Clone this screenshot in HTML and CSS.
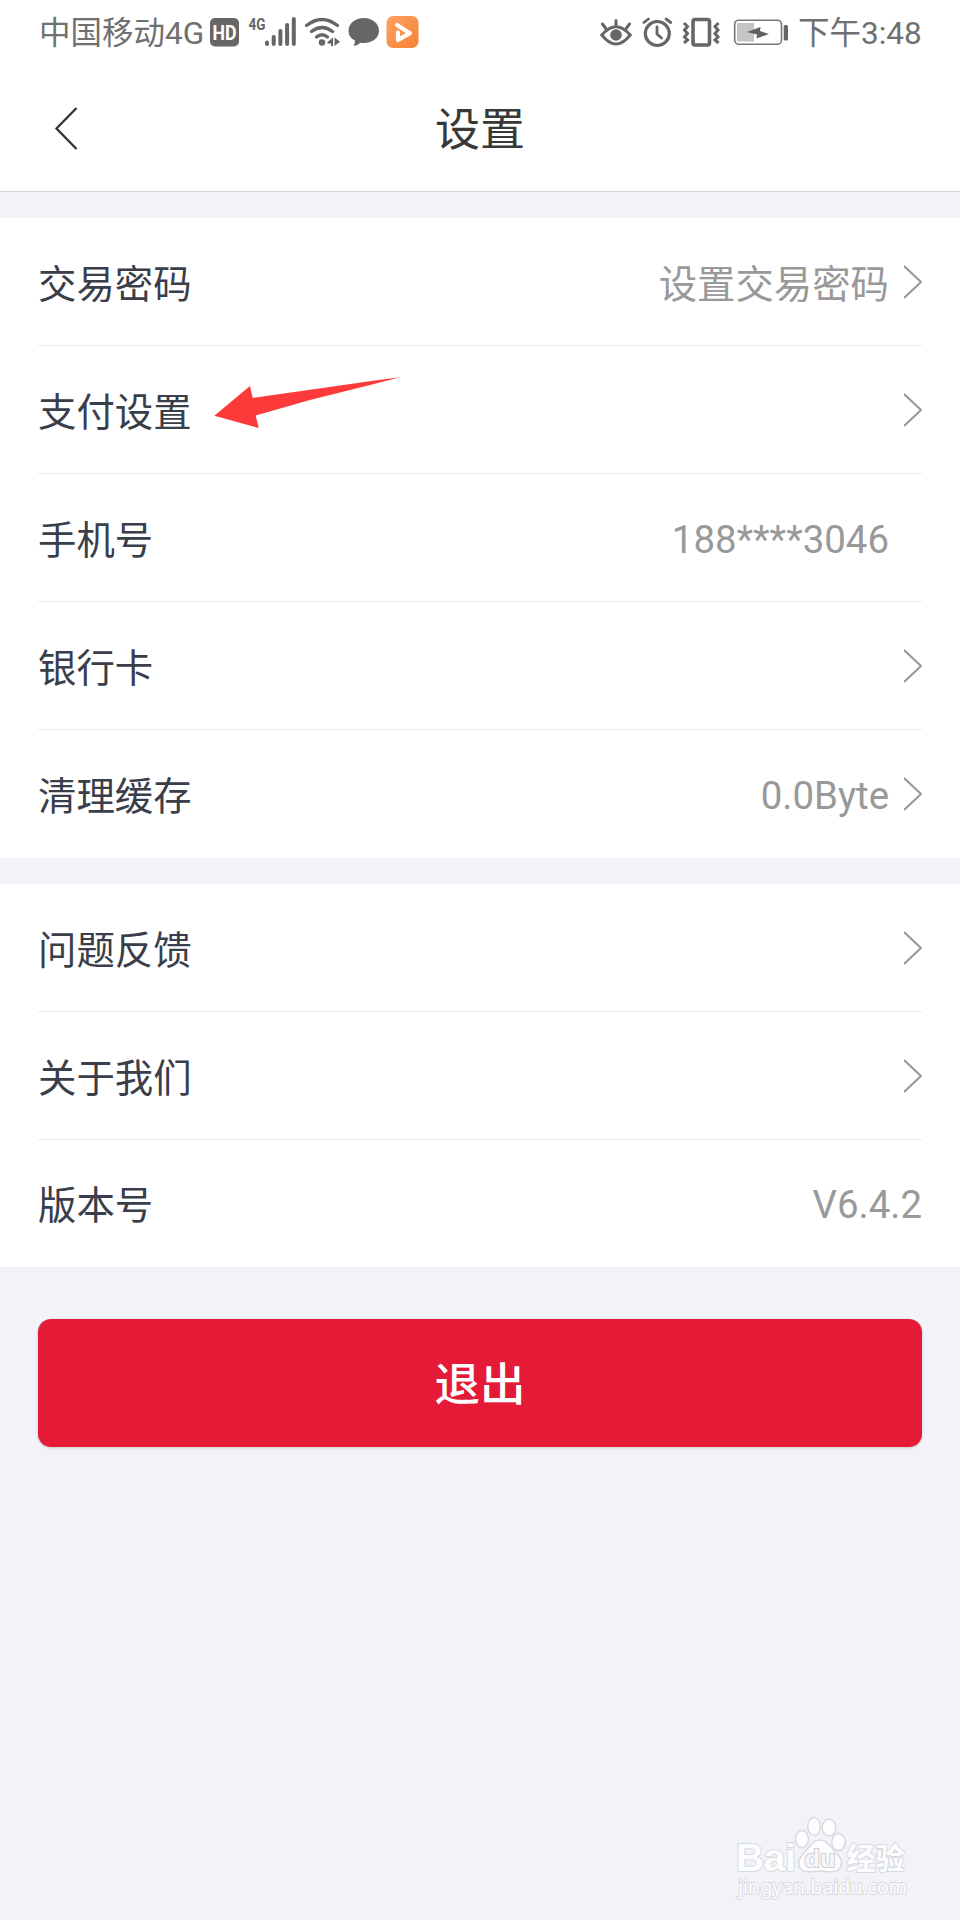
FILE: index.html
```html
<!DOCTYPE html>
<html lang="zh-CN">
<head>
<meta charset="utf-8">
<title>设置</title>
<link rel="stylesheet" href="styles.css">
</head>
<body>
<div class="screen">
  <div class="status">
    <div class="status-group">
      <span class="carrier">中国移动4G</span>
      <svg class="status-icons" width="212" height="64" viewBox="210 0 212 64">
        <rect x="210" y="18" width="29" height="28.500" rx="5" fill="#666"/>
        <text class="hd" x="212.500" y="39.500" textLength="24" lengthAdjust="spacingAndGlyphs">HD</text>
        <text class="net" x="248.500" y="30" textLength="17" lengthAdjust="spacingAndGlyphs">4G</text>
        <g stroke="#666" stroke-width="4" stroke-linecap="round" fill="none">
          <path d="M267 42.500V44M273.700 37V44M280.400 31V44M287.100 25V44M293.800 19V44"/>
        </g>
        <g stroke="#666" stroke-width="3.400" stroke-linecap="round" fill="none">
          <path d="M306.500 25.500Q322 13.500 337.500 25.500M311.500 31.500Q322 23.500 332.500 31.500M316.500 37Q322 32.500 327.500 37"/>
        </g>
        <circle cx="322" cy="42.500" r="3.200" fill="#666"/>
        <path d="M333 37.500V46H331V43.500H327.500V42ZM334.500 37.500V46L340 41.800Z" fill="#666"/>
        <path d="M363.800 18C372.500 18 379 23.500 379 30.800S372.500 43 364 43Q361.800 43 360.500 42.700Q357.500 45.500 353.500 46Q355 43.500 355 40.500Q348.500 37.500 348.500 30.800C348.500 23.500 355 18 363.800 18Z" fill="#666"/>
        <defs><linearGradient id="play" x1="0" y1="0" x2="1" y2="1"><stop offset="0" stop-color="#ffa163"/><stop offset="1" stop-color="#f58235"/></linearGradient></defs>
        <rect x="386.500" y="16" width="32" height="32" rx="6.500" fill="url(#play)"/>
        <path d="M397 25L410 33.200L398 40V32.500" fill="none" stroke="#fff" stroke-width="4.200" stroke-linejoin="round" stroke-linecap="round"/>
      </svg>
    </div>
    <div class="status-group">
      <svg class="status-icons" width="198" height="64" viewBox="600 0 198 64">
        <g stroke="#666" stroke-width="3" fill="none" stroke-linecap="round">
          <path d="M601.800 35Q616 18.500 630.200 35Q616 53 601.800 35ZM616 25V20.500M605.500 28L602.500 24M626.500 28L629.500 24"/>
        </g>
        <circle cx="616" cy="35" r="5.800" fill="#666"/>
        <g stroke="#666" stroke-width="3.200" fill="none" stroke-linecap="round">
          <circle cx="657.300" cy="33.500" r="12"/>
          <path d="M657 27V34L661.500 38M643.800 22.500L648.500 19M670.800 22.500L666 19" stroke-width="2.800"/>
        </g>
        <rect x="693" y="19.500" width="16.500" height="25.500" rx="2" fill="none" stroke="#666" stroke-width="3.600"/>
        <path d="M684 23L687.500 26.500L684.500 30L687.500 33.500L684.500 37L687.500 40L684 43M718.500 23L715 26.500L718 30L715 33.500L718 37L715 40L718.500 43" fill="none" stroke="#666" stroke-width="3"/>
        <rect x="734.700" y="20.200" width="46.800" height="24" rx="4" fill="none" stroke="#777" stroke-width="1.600"/>
        <rect x="737" y="23" width="17" height="18.500" fill="#c4c4c4"/>
        <path d="M747 32L760.500 27L760 31L769 34L756.500 38.500L757 34.500Z" fill="#606060"/>
        <rect x="783.700" y="25" width="4.300" height="15.500" rx="1.500" fill="#666"/>
      </svg>
      <span class="clock">下午3:48</span>
    </div>
  </div>

  <div class="header">
    <svg class="back" width="26" height="46" viewBox="0 0 26 46"><path d="M23.500 3L3.500 23.500L23.500 44" fill="none" stroke="#333" stroke-width="2.300"/></svg>
    <h1 class="title">设置</h1>
    <span class="back"></span>
  </div>

  <div class="card">
    <div class="row"><span class="label">交易密码</span><span class="value cjk">设置交易密码</span><svg class="chev" viewBox="0 0 18 34"><path d="M0 1L17 17L0 33"/></svg></div>
    <div class="row"><span class="label">支付设置</span><svg class="chev" viewBox="0 0 18 34"><path d="M0 1L17 17L0 33"/></svg>
      <svg class="pointer" width="188" height="54" viewBox="213 375 188 54"><path d="M214.300 415.700L250 386L252.700 398L375 380.600L400 377.300L374 384L310 400L255.700 415.500L258.700 428Z" fill="#fc3a3a"/></svg>
    </div>
    <div class="row"><span class="label">手机号</span><span class="value inset">188****3046</span></div>
    <div class="row"><span class="label">银行卡</span><svg class="chev" viewBox="0 0 18 34"><path d="M0 1L17 17L0 33"/></svg></div>
    <div class="row"><span class="label">清理缓存</span><span class="value">0.0Byte</span><svg class="chev" viewBox="0 0 18 34"><path d="M0 1L17 17L0 33"/></svg></div>
  </div>

  <div class="card">
    <div class="row"><span class="label">问题反馈</span><svg class="chev" viewBox="0 0 18 34"><path d="M0 1L17 17L0 33"/></svg></div>
    <div class="row"><span class="label">关于我们</span><svg class="chev" viewBox="0 0 18 34"><path d="M0 1L17 17L0 33"/></svg></div>
    <div class="row"><span class="label">版本号</span><span class="value last">V6.4.2</span></div>
  </div>

  <button class="logout">退出</button>

  <svg class="watermark" width="200" height="100" viewBox="732 1812 200 100">
    <g fill="#fcfdfe" stroke="#d9dade" stroke-width="1.500">
      <ellipse cx="802" cy="1839" rx="6.500" ry="8.500"/>
      <ellipse cx="814" cy="1826.500" rx="6.300" ry="9"/>
      <ellipse cx="829" cy="1827.500" rx="6.800" ry="8.500"/>
      <ellipse cx="838.500" cy="1842" rx="6.700" ry="8.500"/>
      <path d="M820 1840C828 1840 831 1848 836 1853C842 1858 843 1864 840 1868C836 1874 828 1871 820 1871S804 1874 800 1868C797 1863 799 1858 804 1853C809 1848 812 1840 820 1840Z"/>
    </g>
    <text class="wm wm-bai" x="736" y="1870.500" textLength="60" lengthAdjust="spacingAndGlyphs">Bai</text>
    <text class="wm wm-du" x="804.500" y="1866.500" textLength="31" lengthAdjust="spacingAndGlyphs">du</text>
    <text class="wm wm-cn" x="846.500" y="1868.500" textLength="58" lengthAdjust="spacingAndGlyphs">经验</text>
    <text class="wm wm-url" x="738" y="1893.500" textLength="169" lengthAdjust="spacingAndGlyphs">jingyan.baidu.com</text>
  </svg>
</div>
</body>
</html>
```
FILE: styles.css
```css
* { box-sizing: border-box; }
body {
  margin: 0;
  background: #f2f3f8;
  font-family: Roboto, "Noto Sans CJK SC", sans-serif;
}
.screen { position: relative; width: 960px; height: 1920px; overflow: hidden; background: #f2f3f8; }
.screen svg { display: block; flex: none; }

.status {
  display: flex;
  justify-content: space-between;
  height: 64px;
  padding: 0 38px;
  background: #fff;
}
.status-group { display: flex; align-items: center; }
.carrier, .clock {
  font-size: 31.5px;
  line-height: 64px;
  height: 64px;
  padding-top: 2px;
  font-weight: 400;
  color: #707070;
  white-space: nowrap;
}
.carrier { width: 172px; padding-left: 1px; }
.clock { width: 124px; }
.hd { font: 700 20px Roboto, sans-serif; fill: #fff; }
.net { font: 700 17px Roboto, sans-serif; fill: #666; }

.header {
  display: flex;
  align-items: center;
  justify-content: space-between;
  height: 128px;
  padding: 0 53px;
  background: #fff;
  border-bottom: 1px solid #d2d2d4;
}
.back { width: 26px; }
.title {
  margin: 0;
  padding-top: 6px;
  font-size: 45px;
  line-height: 60px;
  font-weight: 400;
  color: #383838;
}

.card { margin-top: 26px; padding: 0 38px; background: #fff; }
.row {
  position: relative;
  display: flex;
  align-items: center;
  height: 128px;
  border-bottom: 1px solid #ebebed;
  font-size: 38.4px;
  line-height: 56px;
}
.card + .card .row:last-child { height: 127px; }
.row:last-child { border-bottom-color: transparent; }
.label { flex: 1; padding-top: 6px; color: #3a3e4a; }
.value { margin-right: 15px; padding-top: 4px; color: #999; }
.cjk { padding-top: 6px; }
.inset { margin-right: 33px; }
.last { margin-right: 0; }
.chev { width: 18px; height: 34px; fill: none; stroke: #999; stroke-width: 2.2; }
.pointer { position: absolute; left: 175px; top: 29px; }

.logout {
  display: block;
  width: 884px;
  height: 128px;
  margin: 52px 38px 0;
  padding: 6px 0 0;
  border: 0;
  border-radius: 13px;
  background: #e41a36;
  box-shadow: 0 1px 3px rgba(0, 0, 0, 0.18);
  color: #fff;
  font: 500 45.5px/60px Roboto, "Noto Sans CJK SC", sans-serif;
}

.watermark { position: absolute; left: 732px; top: 1812px; }
.wm { fill: #fcfdfe; stroke: #d9dade; stroke-width: 2px; paint-order: stroke; stroke-linejoin: round; }
.wm-bai { font: 700 39px "Liberation Sans", sans-serif; }
.wm-du { font: 700 24px "Liberation Sans", sans-serif; fill: #f6f7f9; stroke: #cfd0d4; }
.wm-cn { font: 700 30px "Noto Sans CJK SC", sans-serif; }
.wm-url { font: 400 20.500px "Noto Sans", sans-serif; }
```
